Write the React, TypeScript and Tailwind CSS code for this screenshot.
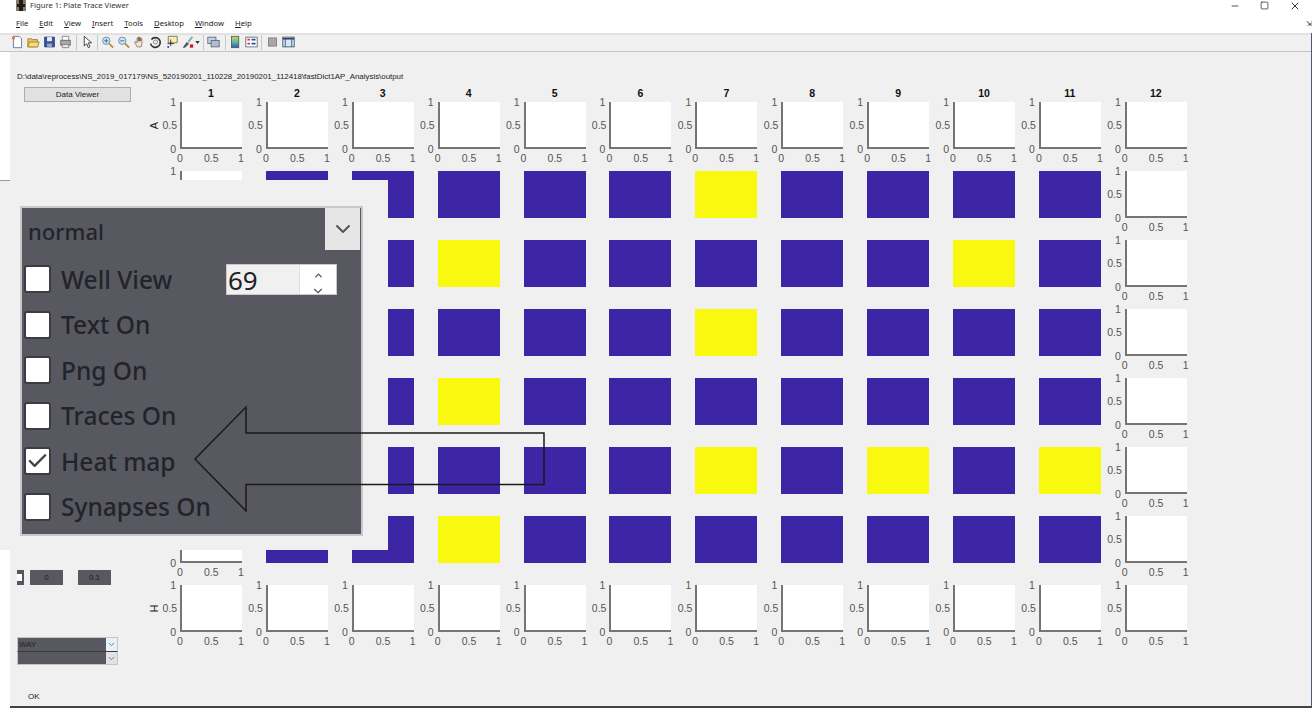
import { ChevronDown, ChevronUp, Check, Minus, Square, X } from "lucide-react";

const FONT = "font-['Noto_Sans','Liberation_Sans',sans-serif]";
const PLOT_FONT = "font-['Liberation_Sans',sans-serif]";
const COLUMNS = [1, 2, 3, 4, 5, 6, 7, 8, 9, 10, 11, 12];
const ROWS = ["A", "B", "C", "D", "E", "F", "G", "H"];
const MENUS = ["File", "Edit", "View", "Insert", "Tools", "Desktop", "Window", "Help"];
const OPTIONS = [
  { label: "Well View", checked: false },
  { label: "Text On", checked: false },
  { label: "Png On", checked: false },
  { label: "Traces On", checked: false },
  { label: "Heat map", checked: true },
  { label: "Synapses On", checked: false },
];

// wells that came out yellow, keyed by row
const YELLOW: Record<string, number[]> = {
  B: [7],
  C: [4, 10],
  D: [7],
  E: [4],
  F: [7, 9, 11],
  G: [4],
};

function Plot({
  label,
  showTop = true,
  showBottom = true,
}: {
  label?: string;
  showTop?: boolean;
  showBottom?: boolean;
}) {
  return (
    <div
      className={`relative w-[62px] h-[47px] bg-white border-l-2 border-b-2 border-[#757575] text-[10.500px] leading-none text-[#555] ${PLOT_FONT}`}
    >
      {showTop && <span className="absolute right-[66px] -top-[5px]">1</span>}
      {showTop && showBottom && <span className="absolute right-[65px] top-[18px]">0.5</span>}
      {showBottom && <span className="absolute right-[66px] top-[42px]">0</span>}
      {showBottom && <span className="absolute -left-[5px] top-[51px]">0</span>}
      {showBottom && <span className="absolute left-[22px] top-[51px]">0.5</span>}
      {showBottom && <span className="absolute left-[56px] top-[51px]">1</span>}
      {label && (
        <span className="absolute -left-[31px] top-[18px] -rotate-90 text-[11px] text-[#222]">
          {label}
        </span>
      )}
    </div>
  );
}

function Well({ yellow }: { yellow: boolean }) {
  return (
    <div
      className={
        yellow
          ? "w-[62px] h-[47px] bg-[#f9f90f]"
          : "w-[62px] h-[47px] bg-[#3c26a5]"
      }
    />
  );
}

function ToolIcon({ children }: { children: React.ReactNode }) {
  return (
    <div className="w-[16px] h-[14px] shrink-0 flex justify-center">
      <svg viewBox="0 0 16 16" className="w-[13px] h-[14px]">
        {children}
      </svg>
    </div>
  );
}

function ToolSep({ className }: { className: string }) {
  return <div className={`w-px h-[15px] bg-[#c8c8c8] ${className}`} />;
}

function Toolbar() {
  return (
    <div className="h-[19px] bg-[#f0f0f0] border-t-2 border-[#e2e2e2] border-b border-b-[#c4c4c4] flex items-center pl-[9px] pb-[2px]">
      <ToolIcon>
        <path d="M3 1h7l3 3v11H3z" fill="#fff" stroke="#4a6a8a" />
        <circle cx="3" cy="3" r="2" fill="#e8743a" />
      </ToolIcon>
      <ToolIcon>
        <path d="M1 4h5l1 1h6v9H1z" fill="#e8c45c" stroke="#a07c20" />
        <path d="M3 8h12l-2 6H1z" fill="#f3da88" stroke="#a07c20" />
      </ToolIcon>
      <ToolIcon>
        <path d="M2 2h12v12H2z" fill="#3a55a8" stroke="#22356e" />
        <path d="M5 2h6v5H5z" fill="#e8edf5" />
        <path d="M5 10h6v4H5z" fill="#9aa8c8" />
      </ToolIcon>
      <ToolIcon>
        <path d="M4 1h8v5H4z" fill="#fff" stroke="#777" />
        <path d="M2 6h12v6H2z" fill="#a8a8a8" stroke="#666" />
        <path d="M4 11h8v4H4z" fill="#e4e4e4" stroke="#777" />
      </ToolIcon>
      <ToolSep className="ml-[3px] mr-[2px]" />
      <ToolIcon>
        <path d="M4 1v12l3-3 2 5 2-1-2-5h4z" fill="#fff" stroke="#222" />
      </ToolIcon>
      <ToolSep className="ml-[2px] mr-[1px]" />
      <ToolIcon>
        <circle cx="6.500" cy="6.500" r="4.500" fill="#cfe6f5" stroke="#5a7f9c" />
        <path d="M10 10l5 5" stroke="#b8893a" strokeWidth="2" />
        <path d="M4 6.500h5M6.500 4v5" stroke="#2a5a8a" />
      </ToolIcon>
      <ToolIcon>
        <circle cx="6.500" cy="6.500" r="4.500" fill="#cfe6f5" stroke="#5a7f9c" />
        <path d="M10 10l5 5" stroke="#b8893a" strokeWidth="2" />
        <path d="M4 6.500h5" stroke="#2a5a8a" />
      </ToolIcon>
      <ToolIcon>
        <path
          d="M5 14L2 8l1.500-1L5 9V3l1.500 0V7V2h1.500v5V2.500h1.500V7V4h1.500v6l-1 4z"
          fill="#f6e2c8"
          stroke="#6b5a48"
          strokeWidth="0.8"
        />
      </ToolIcon>
      <ToolIcon>
        <path d="M3 5a6 6 0 1 1-1 5" fill="none" stroke="#333" strokeWidth="2" />
        <circle cx="8" cy="8" r="2.500" fill="none" stroke="#5a7f9c" />
      </ToolIcon>
      <ToolIcon>
        <path d="M4 1h11v8H4z" fill="#f4eeb0" stroke="#6a6a3a" />
        <path d="M7 5v8M3 10h8" stroke="#222" />
        <circle cx="4" cy="14" r="1.200" fill="#2a2ad0" />
      </ToolIcon>
      <ToolIcon>
        <path d="M2 15l5-7 3 2-5 5z" fill="#556" />
        <path d="M8 7l5-6 2 1-5 7z" fill="#9aa" />
        <rect x="11" y="11" width="4" height="4" fill="#d01818" />
      </ToolIcon>
      <svg viewBox="0 0 6 4" className="w-[5px] h-[3px]">
        <path d="M0 0h6L3 4z" fill="#333" />
      </svg>
      <ToolSep className="ml-[3px] mr-[1px]" />
      <ToolIcon>
        <rect x="1" y="2" width="10" height="8" fill="#c8d4e4" stroke="#50607a" />
        <rect x="5" y="6" width="10" height="8" fill="#b0bccc" stroke="#50607a" />
      </ToolIcon>
      <ToolSep className="ml-[4px] mr-[1px]" />
      <ToolIcon>
        <defs>
          <linearGradient id="colorbar" x1="0" y1="0" x2="0" y2="1">
            <stop offset="0" stopColor="#e0d050" />
            <stop offset="0.5" stopColor="#50c0a0" />
            <stop offset="1" stopColor="#4050c0" />
          </linearGradient>
        </defs>
        <rect x="3" y="1" width="9" height="14" fill="url(#colorbar)" stroke="#555" />
      </ToolIcon>
      <ToolIcon>
        <rect x="1" y="2" width="14" height="12" fill="#fff" stroke="#50607a" />
        <path d="M3 5h3M3 10h3" stroke="#d03030" strokeWidth="2" />
        <path d="M8 5h5M8 10h5" stroke="#3050a0" strokeWidth="2" />
      </ToolIcon>
      <ToolSep className="ml-[2px] mr-[2px]" />
      <ToolIcon>
        <rect x="3" y="3" width="10" height="10" fill="#a8a8a8" stroke="#777" />
      </ToolIcon>
      <ToolIcon>
        <rect x="1" y="2" width="14" height="12" fill="#d8e4f0" stroke="#33496a" />
        <path d="M1 4h14" stroke="#33496a" strokeWidth="2" />
        <path d="M4 4v10M12 4v10" stroke="#33496a" />
      </ToolIcon>
    </div>
  );
}

function Sidebar() {
  return (
    <div className={`w-[170px] shrink-0 flex flex-col pl-[7px] text-[#222] ${PLOT_FONT}`}>
      <div className="mt-[20px] h-[9px] text-[7.900px] leading-[9px] whitespace-nowrap">
        {"D:\\data\\reprocess\\NS_2019_017179\\NS_520190201_110228_20190201_112418\\fastDict1AP_Analysis\\output"}
      </div>
      <button className="mt-[6px] ml-[7px] w-[107px] h-[15px] bg-[#e1e1e1] border border-[#adadad] text-[8px] leading-none">
        Data Viewer
      </button>
      <div className="mt-[468px] h-[15px] flex items-center">
        <div className="w-[7px] h-[15px] bg-[#555760] flex items-center">
          <div className="w-[5px] h-[7px] bg-white" />
        </div>
        <div className="ml-[6px] w-[33px] h-[15px] bg-[#585860] flex items-center justify-center text-[8px] text-[#1c1c20]">
          0
        </div>
        <div className="ml-[15px] w-[33px] h-[15px] bg-[#585860] flex items-center justify-center text-[8px] text-[#1c1c20]">
          0.1
        </div>
      </div>
      <div className="mt-[52px] w-[101px] flex flex-col">
        <div className="h-[14px] flex bg-[#585860] border border-[#c4c4c4] border-b-0">
          <span className="flex-1 pl-[1px] text-[8px] leading-[14px] text-[#222]">WAY</span>
          <div className="w-[11px] bg-[#e5f1fb] flex items-center justify-center">
            <ChevronDown size={9} className="text-[#555]" />
          </div>
        </div>
        <div className="h-[14px] flex bg-[#585860] border border-[#c4c4c4] border-t-[#3a3a40]">
          <span className="flex-1" />
          <div className="w-[11px] bg-[#e1e1e1] flex items-center justify-center">
            <ChevronDown size={9} className="text-[#555]" />
          </div>
        </div>
      </div>
      <div className="mt-[27px] ml-[11px] text-[8px] leading-[10px]">OK</div>
    </div>
  );
}

function PlateCell({ row, col }: { row: string; col: number }) {
  if (row === "A" || row === "H") return <Plot label={col === 1 ? row : undefined} />;
  if (col === 12) return <Plot />;
  // the first column only peeks out above and below the pasted panel
  if (col === 1) {
    if (row === "B") return <Plot showBottom={false} />;
    if (row === "G") return <Plot showTop={false} />;
    return null;
  }
  return <Well yellow={(YELLOW[row] ?? []).includes(col)} />;
}

function Plate() {
  return (
    <div
      className={`mt-[34px] grid grid-cols-[repeat(12,85.9px)] grid-rows-[16px_repeat(8,69px)] text-[#111] ${PLOT_FONT}`}
    >
      {COLUMNS.map((col) => (
        <div
          key={col}
          className="w-[62px] text-center text-[10.500px] leading-[14px] font-bold"
        >
          {col}
        </div>
      ))}
      {ROWS.flatMap((row) =>
        COLUMNS.map((col) => (
          <div key={row + col}>
            <PlateCell row={row} col={col} />
          </div>
        )),
      )}
    </div>
  );
}

function OptionsPanel() {
  return (
    <div className="absolute left-0 top-[128px] w-[388px] h-[370px] bg-[#f0f0f0] pl-[20px] pt-[26px]">
      <div className="absolute left-0 top-0 w-[10px] h-px bg-[#9a9a9a]" />
      <div className="w-[343px] h-[330px] bg-[#585860] border-2 border-[#c8c8cc] flex flex-col text-[#23232b]">
        <div className="h-[45px] flex shrink-0">
          <span className="flex-1 pl-[6px] pt-[7px] text-[22px] leading-[32px] font-medium">
            normal
          </span>
          <div className="w-[35px] h-[42px] mr-[1px] bg-[#e6e6e6] flex items-center justify-center">
            <ChevronDown size={24} strokeWidth={2} className="text-[#555]" />
          </div>
        </div>
        <div className="flex flex-col gap-[19.500px] pt-[13px] pl-[2px] relative">
          {OPTIONS.map((opt) => (
            <label key={opt.label} className="h-[26px] flex items-center gap-[10px]">
              <span className="w-[27px] h-[28px] bg-white border-2 border-[#3c3c42] rounded-[3px] flex items-center justify-center shrink-0">
                {opt.checked && <Check size={24} strokeWidth={2.5} className="text-[#444]" />}
              </span>
              <span className="pt-[1px] text-[24.500px] leading-[26px] whitespace-nowrap font-medium">
                {opt.label}
              </span>
            </label>
          ))}
          <div className="absolute left-[204px] top-[11px] w-[111px] h-[31px] bg-[#f0f0f0] border border-[#c8c8d0] flex">
            <span className="flex-1 pl-[1px] text-[26px] leading-[31px] text-[#222]">69</span>
            <div className="w-[37px] bg-white border-l border-[#e0e0e0] flex flex-col items-center overflow-hidden">
              <ChevronUp size={11} strokeWidth={3} className="text-[#555] mt-[5px] shrink-0" />
              <ChevronDown size={14} strokeWidth={2} className="text-[#555] mt-[3px] shrink-0" />
            </div>
          </div>
        </div>
      </div>
    </div>
  );
}

export default function App() {
  return (
    <div className={`w-[1312px] h-[708px] flex flex-col overflow-hidden bg-white ${FONT}`}>
      <div className="h-[11px] flex items-center pl-[16px] relative text-[7.700px] text-[#333]">
        <svg viewBox="0 0 10 11" className="w-[10px] h-[11px] mr-[4px]">
          <rect width="10" height="11" fill="#8a7a68" />
          <path d="M3 0h4v11H3zM1 4h8v3H1z" fill="#1d1d1d" />
        </svg>
        Figure 1: Plate Trace Viewer
        <div className="ml-auto h-[11px] flex items-center text-[#333]">
          <Minus size={10} className="mr-[20px]" />
          <Square size={9} className="mr-[20px]" strokeWidth={2} />
          <X size={12} className="mr-[11px]" />
        </div>
      </div>
      <div className="h-[22px] flex items-center pl-[16px] pt-[4px] gap-[11px] text-[7.700px] text-[#222] relative">
        {MENUS.map((m) => (
          <span key={m}>
            <span className="underline">{m[0]}</span>
            {m.slice(1)}
          </span>
        ))}
        <span className="absolute right-0 top-[9px] text-[7px] leading-none text-[#222]">⇲</span>
      </div>
      <div className="border-r border-[#4a5a7a]">
        <Toolbar />
      </div>
      <div className="relative flex-1 flex bg-white">
        <div className="w-[10px] shrink-0 bg-white" />
        <div className="flex-1 flex bg-[#f0f0f0] border-b-2 border-b-[#444] border-r border-r-[#4a5a7a]">
          <Sidebar />
          <Plate />
        </div>
        <OptionsPanel />
        <svg
          viewBox="0 0 360 120"
          className="absolute left-[190px] top-[353px] w-[360px] h-[120px]"
        >
          <path
            d="M5 54L56 2V28H354V79.500H56V106z"
            fill="none"
            stroke="#1a1a1a"
            strokeWidth="1.500"
          />
        </svg>
      </div>
    </div>
  );
}
